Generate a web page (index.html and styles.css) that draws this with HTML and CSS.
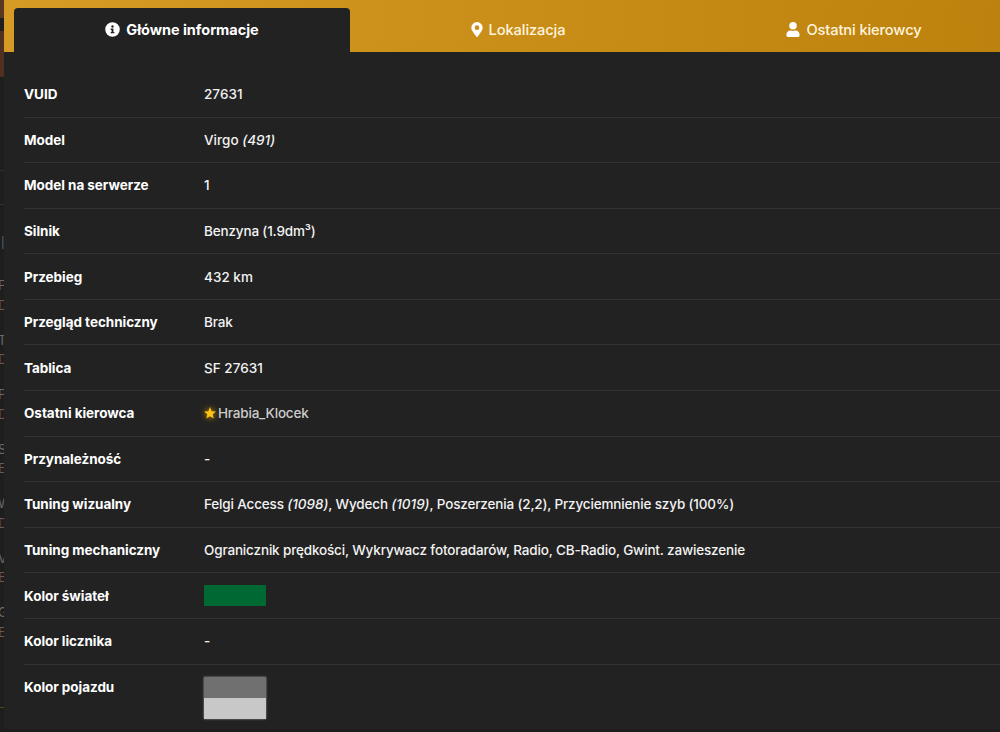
FILE: index.html
```html
<!DOCTYPE html>
<html lang="pl">
<head>
<meta charset="utf-8">
<title>Główne informacje</title>
<link rel="stylesheet" href="styles.css">
</head>
<body>
<div class="backdrop">
  <div class="block block-top"></div>
  <div class="block block-main"></div>
  <div class="block block-title"></div>
  <div class="block block-filter"></div>
  <div class="block-mark">|</div>
  <div class="entry"><span>P</span><span>D</span></div>
  <div class="entry"><span>T</span><span>D</span></div>
  <div class="entry"><span>P</span><span>D</span></div>
  <div class="entry"><span>S</span><span>E</span></div>
  <div class="entry"><span>W</span><span>D</span></div>
  <div class="entry"><span>V</span><span>E</span></div>
  <div class="entry"><span>G</span><span>E</span></div>
  <div class="block-end"></div>
</div>
<main class="modal">
  <nav class="tabs">
    <a class="tab active"><svg class="icon-info" viewBox="0 0 512 512"><path fill-rule="evenodd" d="M256 8a248 248 0 1 0 0 496a248 248 0 1 0 0-496zM256 110a42 42 0 1 1 0 84a42 42 0 1 1 0-84zM320 376c0 7-5 12-12 12h-104c-7 0-12-5-12-12v-24c0-7 5-12 12-12h20v-68h-20c-7 0-12-5-12-12v-24c0-7 5-12 12-12h72c7 0 12 5 12 12v104h20c7 0 12 5 12 12z"/></svg><span>Główne informacje</span></a>
    <a class="tab"><svg class="icon-pin" viewBox="0 0 384 512"><path fill-rule="evenodd" d="M172 502C27 291 0 270 0 192a192 192 0 1 1 384 0c0 78-27 99-172 310a24 24 0 0 1-40 0zM192 272a80 80 0 1 0 0-160a80 80 0 0 0 0 160z"/></svg><span>Lokalizacja</span></a>
    <a class="tab"><svg class="icon-user" viewBox="0 0 448 512"><path d="M224 256a128 128 0 1 0 0-256a128 128 0 1 0 0 256zM314 288h-17a174 174 0 0 1-146 0h-17C60 288 0 348 0 422v42c0 27 21 48 48 48h352c27 0 48-21 48-48v-42c0-74-60-134-134-134z"/></svg><span>Ostatni kierowcy</span></a>
  </nav>
  <dl class="details">
    <div class="row"><dt>VUID</dt><dd class="number">27631</dd></div>
    <div class="row"><dt>Model</dt><dd class="number">Virgo <i>(491)</i></dd></div>
    <div class="row"><dt>Model na serwerze</dt><dd class="number">1</dd></div>
    <div class="row"><dt>Silnik</dt><dd>Benzyna (1.9dm³)</dd></div>
    <div class="row"><dt>Przebieg</dt><dd class="number">432 km</dd></div>
    <div class="row"><dt>Przegląd techniczny</dt><dd>Brak</dd></div>
    <div class="row"><dt>Tablica</dt><dd class="number">SF 27631</dd></div>
    <div class="row"><dt>Ostatni kierowca</dt><dd class="driver"><svg class="star" viewBox="0 0 24 24"><path d="M12 0l3.3 8.4 8.7.5-6.7 5.6 2.2 8.5L12 18.3l-7.5 4.7 2.2-8.5L0 8.900l8.700-.5z"/></svg>Hrabia_Klocek</dd></div>
    <div class="row"><dt>Przynależność</dt><dd>-</dd></div>
    <div class="row"><dt>Tuning wizualny</dt><dd>Felgi Access <i>(1098)</i>, Wydech <i>(1019)</i>, Poszerzenia (2,2), Przyciemnienie szyb (100%)</dd></div>
    <div class="row"><dt>Tuning mechaniczny</dt><dd>Ogranicznik prędkości, Wykrywacz fotoradarów, Radio, CB-Radio, Gwint. zawieszenie</dd></div>
    <div class="row"><dt>Kolor świateł</dt><dd><div class="swatch green"></div></dd></div>
    <div class="row"><dt>Kolor licznika</dt><dd>-</dd></div>
    <div class="row last"><dt>Kolor pojazdu</dt><dd><div class="vehicle"><div class="swatch dark-grey"></div><div class="swatch light-grey"></div></div></dd></div>
  </dl>
</main>
</body>
</html>
```
FILE: styles.css
```css
* { box-sizing: border-box; }
body {
  margin: 0;
  width: 1000px;
  height: 732px;
  overflow: hidden;
  display: flex;
  background: #1e1c1d;
  font-family: Inter, "Liberation Sans", sans-serif;
  color: #f2f2f2;
}
.backdrop { width: 4px; height: 732px; overflow: hidden; background: #1e1e1e; font-size: 13px; flex: none; }
.block-top { height: 18px; background: #593722; }
.block-main { height: 59px; border-top: 13px solid #1e1e1e; background: #503120; }
.block-title { height: 94px; border-bottom: 1px solid #303030; }
.block-filter { height: 34px; border-bottom: 1px solid #303030; }
.block-mark { height: 71px; padding-top: 28px; line-height: 20px; font-size: 11px; color: #52697c; padding-left: 1px; }
.entry { height: 54.5px; display: flex; flex-direction: column; line-height: 19.5px; color: #6a6a6a; margin-left: -2px; }
.entry span + span { color: #6e5a4c; }
.block-end { height: 50px; border-bottom: 1px solid #554319; }
.modal { width: 996px; flex: none; height: 729px; background: #222; }
.tabs {
  height: 52px;
  padding: 8px 0 0 10px;
  display: grid;
  grid-template-columns: 336px 336px 336px;
  background: linear-gradient(100deg, #d69b24, #bd820d);
  overflow: hidden;
}
.tab {
  height: 44px;
  display: flex;
  align-items: center;
  justify-content: center;
  font-size: 14.7px;
  letter-spacing: -0.13px;
  color: #fff5df;
  font-weight: 450;
  padding-bottom: 1px;
  border-radius: 4px 4px 0 0;
}
.tab.active { background: #222; color: #fff; font-weight: 700; font-size: 14.5px; letter-spacing: -0.04px; }
.tab svg { fill: #fff; height: 15px; margin-right: 6px; flex: none; }
.icon-info { width: 15px; }
.icon-pin { width: 12px; }
.icon-user { width: 14px; }
.details { margin: 0; padding: 20px 0 0 20px; }
.row { height: 45.58px; border-bottom: 1px solid #323232; display: flex; align-items: center; font-size: 13.5px; }
.row.last { height: 64px; border: 0; align-items: flex-start; padding-top: 12px; }
.row.last dt { line-height: 20px; }
dt { width: 180px; font-weight: 700; color: #fff; flex: none; letter-spacing: -0.04px; }
dd { margin: 0; white-space: nowrap; font-weight: 450; letter-spacing: -0.158px; }
dd.number { letter-spacing: 0.03px; }
i { font-weight: 500; letter-spacing: -0.02px; }
.driver { color: #ccc; display: flex; align-items: center; letter-spacing: -0.2px; }
.star { width: 12px; height: 12px; fill: #ffc414; margin-right: 2px; filter: drop-shadow(0 0 3px #d99a00); }
.swatch { width: 62px; height: 21px; }
.green { background: #006833; }
.dark-grey { background: #707070; }
.light-grey { background: #c8c8c8; }
.vehicle { box-shadow: 0 0 2px #999; }
```
